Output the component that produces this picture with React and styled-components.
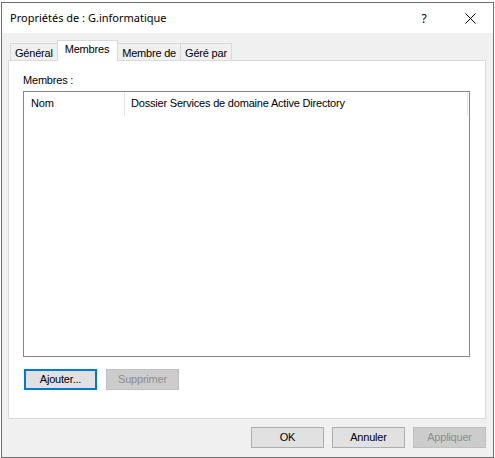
import React from "react";
import styled, { createGlobalStyle } from "styled-components";

const GlobalStyle = createGlobalStyle`
    html, body {
        margin: 0;
        padding: 0;
        background: #ffffff;
    }
    body {
        font-family: "Liberation Sans", Arial, sans-serif;
        font-size: 11px;
        letter-spacing: -0.2px;
        color: #000;
    }
`;

const Window = styled.div`
    margin: 2px 0 0 1px;
    width: 493px;
    box-sizing: border-box;
    border: 1px solid #6f6f6f;
    background: #f0f0f0;
    display: flex;
    flex-direction: column;
`;

const TitleBar = styled.div`
    height: 30px;
    background: #fff;
    display: flex;
    align-items: center;
`;

const Title = styled.div`
    flex: 1;
    padding-left: 8px;
    font-family: "Noto Sans", "Open Sans", sans-serif;
    font-size: 11px;
    letter-spacing: 0;
    line-height: 30px;
    color: #000;
`;

const TitleButton = styled.div`
    width: 46px;
    height: 30px;
    display: flex;
    align-items: center;
    justify-content: center;
    font-family: "Noto Sans", sans-serif;
    font-size: 12px;
    letter-spacing: 0;
    color: #000;
`;

const Body = styled.div`
    padding: 7px 7px 9px 6px;
    display: flex;
    flex-direction: column;
`;

const TabStrip = styled.div`
    display: flex;
    align-items: flex-end;
    height: 20px;
    padding-left: 3px;
`;

const Tab = styled.div`
    position: relative;
    box-sizing: border-box;
    margin-left: -1px;
    border: 1px solid #d9d9d9;
    border-bottom: none;
    height: ${(p) => (p.$active ? "21px" : "17px")};
    margin-bottom: ${(p) => (p.$active ? "-1px" : "0")};
    padding: ${(p) => (p.$active ? "2px 8px 0 7px" : "3px 4px 0 4px")};
    background: ${(p) => (p.$active ? "#fff" : "#f0f0f0")};
    z-index: ${(p) => (p.$active ? 2 : 1)};
    line-height: 13px;
    white-space: nowrap;
`;

const Panel = styled.div`
    background: #fff;
    border: 1px solid #d9d9d9;
    padding: 13px 15px 28px 14px;
    display: flex;
    flex-direction: column;
`;

const Label = styled.div`
    line-height: 13px;
    margin-bottom: 4px;
`;

const ListBox = styled.div`
    height: 266px;
    box-sizing: border-box;
    border: 1px solid #828790;
    background: #fff;
`;

const HeaderRow = styled.div`
    display: flex;
    height: 24px;
`;

const HeaderCell = styled.div`
    width: ${(p) => p.$width}px;
    box-sizing: border-box;
    padding-left: ${(p) => p.$pad}px;
    border-right: 1px solid #e5e5e5;
    line-height: 23px;
    white-space: nowrap;
    overflow: hidden;
`;

const ButtonRow = styled.div`
    display: flex;
    gap: ${(p) => p.$gap}px;
    margin-top: ${(p) => p.$top}px;
    padding-left: ${(p) => p.$left || 0}px;
    justify-content: ${(p) => (p.$right ? "flex-end" : "flex-start")};
`;

const Button = styled.div`
    width: 73px;
    height: 21px;
    box-sizing: border-box;
    display: flex;
    align-items: center;
    justify-content: center;
    background: ${(p) => (p.$disabled ? "#cccccc" : "#e1e1e1")};
    border: ${(p) =>
        p.$focused ? "2px solid #0078d7" : p.$disabled ? "1px solid #bfbfbf" : "1px solid #adadad"};
    color: ${(p) => (p.$disabled ? "#8c8c8c" : "#000")};
    line-height: 13px;
`;

const CloseIcon = () => (
    <svg width="11" height="11" viewBox="0 0 11 11">
        <path d="M0.5 0.5 L10.5 10.5 M10.5 0.5 L0.5 10.5" stroke="#000" strokeWidth="1" fill="none" />
    </svg>
);

export default function App() {
    return (
        <>
            <GlobalStyle />
            <Window>
                <TitleBar>
                    <Title>Propriétés de : G.informatique</Title>
                    <TitleButton>?</TitleButton>
                    <TitleButton><CloseIcon /></TitleButton>
                </TitleBar>
                <Body>
                    <TabStrip>
                        <Tab>Général</Tab>
                        <Tab $active>Membres</Tab>
                        <Tab>Membre de</Tab>
                        <Tab>Géré par</Tab>
                    </TabStrip>
                    <Panel>
                        <Label>Membres :</Label>
                        <ListBox>
                            <HeaderRow>
                                <HeaderCell $width={101} $pad={7}>Nom</HeaderCell>
                                <HeaderCell $width={343} $pad={6}>Dossier Services de domaine Active Directory</HeaderCell>
                            </HeaderRow>
                        </ListBox>
                        <ButtonRow $gap={9} $top={12} $left={1}>
                            <Button $focused>Ajouter...</Button>
                            <Button $disabled>Supprimer</Button>
                        </ButtonRow>
                    </Panel>
                    <ButtonRow $gap={8} $top={8} $right>
                        <Button>OK</Button>
                        <Button>Annuler</Button>
                        <Button $disabled>Appliquer</Button>
                    </ButtonRow>
                </Body>
            </Window>
        </>
    );
}
